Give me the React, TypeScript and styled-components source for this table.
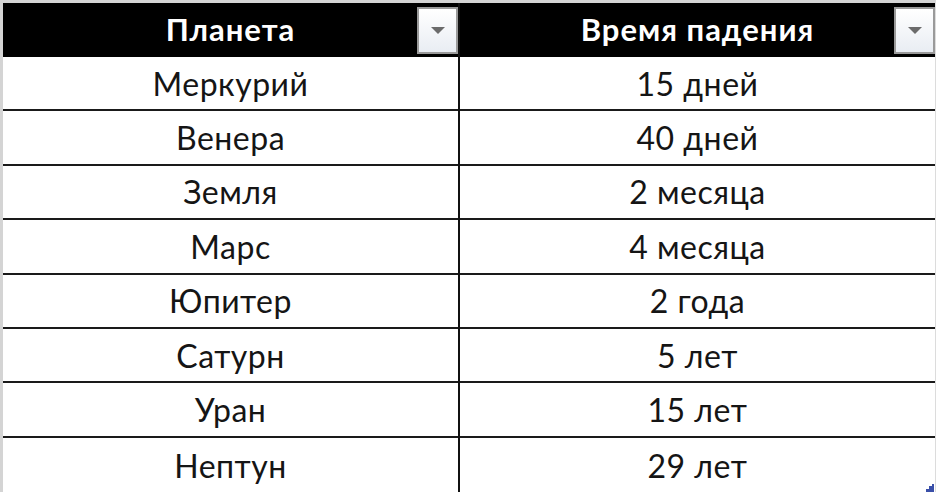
import React from "react";
import styled, { createGlobalStyle } from "styled-components";

const planets: [string, string][] = [
  ["Меркурий", "15 дней"],
  ["Венера", "40 дней"],
  ["Земля", "2 месяца"],
  ["Марс", "4 месяца"],
  ["Юпитер", "2 года"],
  ["Сатурн", "5 лет"],
  ["Уран", "15 лет"],
  ["Нептун", "29 лет"],
];

const GlobalStyle = createGlobalStyle`
  html, body {
    margin: 0;
    padding: 0;
    background: #ffffff;
  }
  body {
    font-family: Lato, "Noto Sans", sans-serif;
  }
`;

const Sheet = styled.div`
  width: 936px;
  height: 492px;
  box-sizing: border-box;
  border-top: 3px solid #d4d4d4;
  border-left: 3px solid #d4d4d4;
  border-right: 1px solid #dcdcdc;
  display: grid;
  grid-template-columns: 455px 2px 1fr;
  grid-template-rows: 54px repeat(8, 1fr);
  position: relative;
  overflow: hidden;
`;

const HeadCell = styled.div`
  background: #000;
  display: grid;
  grid-template-columns: 41px 1fr 41px;
  align-items: center;
  color: #fff;
  font-weight: 700;
  font-size: 31px;
  letter-spacing: 1px;
`;

const HeadLabel = styled.span`
  text-align: center;
  line-height: 1;
  padding-bottom: 2px;
`;

const Filter = styled.div`
  height: 47px;
  box-sizing: border-box;
  border: 2px solid #9a9a9a;
  background: linear-gradient(#ffffff, #e9edf3);
  display: flex;
  align-items: center;
  justify-content: center;
`;

const Arrow = styled.span`
  width: 0;
  height: 0;
  border-left: 7px solid transparent;
  border-right: 7px solid transparent;
  border-top: 7px solid #6b6b6b;
`;

const Divider = styled.div`
  background: #111;
`;

const Cell = styled.div<{ $last?: boolean }>`
  display: flex;
  align-items: center;
  justify-content: center;
  font-size: 32px;
  letter-spacing: 0.5px;
  color: #151515;
  box-sizing: border-box;
  border-bottom: ${(p) => (p.$last ? "none" : "2px solid #1a1a1a")};
  padding-top: ${(p) => (p.$last ? 2 : 0)}px;
`;

const Handle = styled.svg`
  position: absolute;
  right: 1px;
  bottom: 0;
`;

export default function App() {
  return (
    <>
      <GlobalStyle />
      <Sheet>
        <HeadCell>
          <span />
          <HeadLabel>Планета</HeadLabel>
          <Filter>
            <Arrow />
          </Filter>
        </HeadCell>
        <Divider />
        <HeadCell>
          <span />
          <HeadLabel>Время падения</HeadLabel>
          <Filter>
            <Arrow />
          </Filter>
        </HeadCell>
        {planets.map(([name, time], i) => {
          const last = i === planets.length - 1;
          return (
            <React.Fragment key={name}>
              <Cell $last={last}>{name}</Cell>
              <Divider />
              <Cell $last={last}>{time}</Cell>
            </React.Fragment>
          );
        })}
        <Handle width="8" height="8" viewBox="0 0 8 8">
          <path d="M8 0 L8 8 L0 8 L0 5 L3 5 L3 2 L6 2 L6 0 Z" fill="#3a4fa8" />
        </Handle>
      </Sheet>
    </>
  );
}
